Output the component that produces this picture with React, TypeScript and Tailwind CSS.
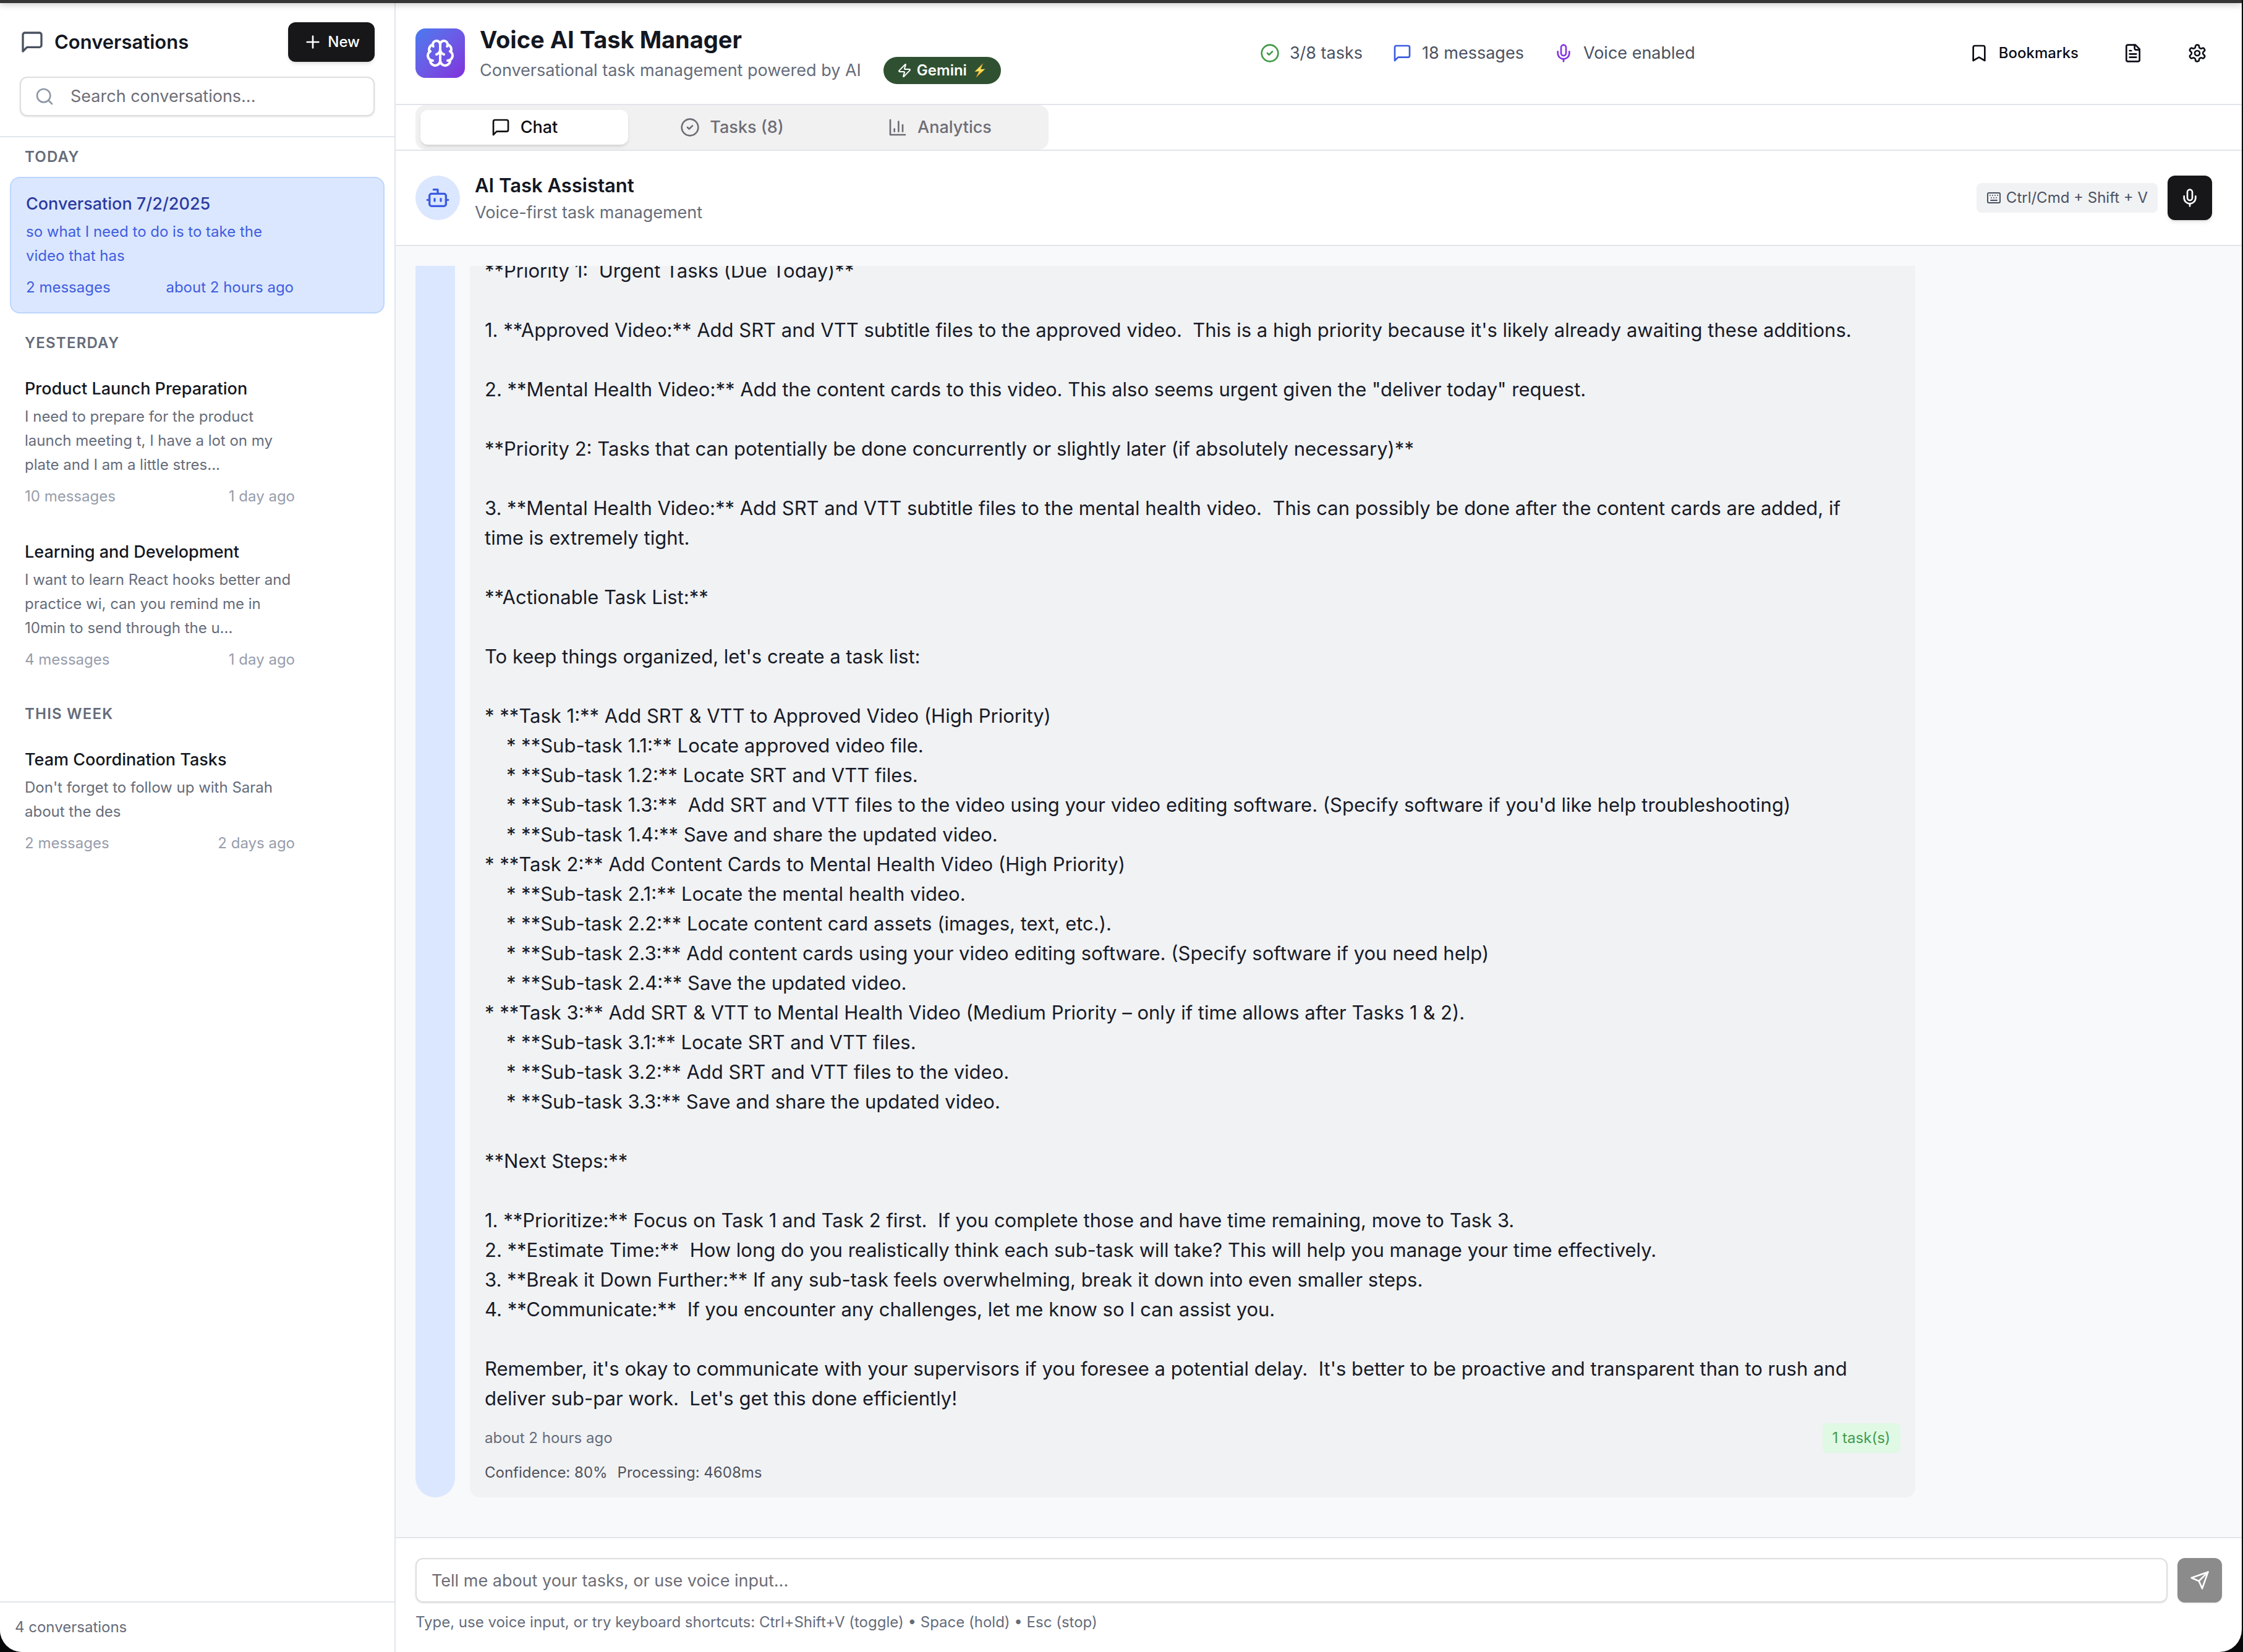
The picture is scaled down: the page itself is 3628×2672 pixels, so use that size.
import type { ReactNode } from "react";

type IconProps = { className?: string };

function Icon({ className, children }: { className?: string; children: ReactNode }) {
  return (
    <svg viewBox="0 0 24 24" fill="none" stroke="currentColor" strokeWidth="2" strokeLinecap="round" strokeLinejoin="round" aria-hidden="true" className={`shrink-0 ${className ?? ""}`}>
      {children}
    </svg>
  );
}

const MessageIcon = ({ className }: IconProps) => (
  <Icon className={className}><path d="M21 15a2 2 0 0 1-2 2H7l-4 4V5a2 2 0 0 1 2-2h14a2 2 0 0 1 2 2z" /></Icon>
);
const PlusIcon = ({ className }: IconProps) => (
  <Icon className={className}><path d="M5 12h14" /><path d="M12 5v14" /></Icon>
);
const SearchIcon = ({ className }: IconProps) => (
  <Icon className={className}><circle cx="11" cy="11" r="8" /><path d="m21 21-4.3-4.3" /></Icon>
);
const CheckIcon = ({ className }: IconProps) => (
  <Icon className={className}><circle cx="12" cy="12" r="10" /><path d="m9 12 2 2 4-4" /></Icon>
);
const MicIcon = ({ className }: IconProps) => (
  <Icon className={className}><path d="M12 2a3 3 0 0 0-3 3v7a3 3 0 0 0 6 0V5a3 3 0 0 0-3-3Z" /><path d="M19 10v2a7 7 0 0 1-14 0v-2" /><path d="M12 19v3" /></Icon>
);
const ChartIcon = ({ className }: IconProps) => (
  <Icon className={className}><path d="M3 3v18h18" /><path d="M18 17V9" /><path d="M13 17V5" /><path d="M8 17v-3" /></Icon>
);
const BookmarkIcon = ({ className }: IconProps) => (
  <Icon className={className}><path d="m19 21-7-4-7 4V5a2 2 0 0 1 2-2h10a2 2 0 0 1 2 2v16z" /></Icon>
);
const FileIcon = ({ className }: IconProps) => (
  <Icon className={className}><path d="M15 2H6a2 2 0 0 0-2 2v16a2 2 0 0 0 2 2h12a2 2 0 0 0 2-2V7Z" /><path d="M14 2v4a2 2 0 0 0 2 2h4" /><path d="M10 9H8" /><path d="M16 13H8" /><path d="M16 17H8" /></Icon>
);
const SettingsIcon = ({ className }: IconProps) => (
  <Icon className={className}><path d="M12.22 2h-.44a2 2 0 0 0-2 2v.18a2 2 0 0 1-1 1.73l-.43.25a2 2 0 0 1-2 0l-.15-.08a2 2 0 0 0-2.73.73l-.22.38a2 2 0 0 0 .73 2.73l.15.1a2 2 0 0 1 1 1.72v.51a2 2 0 0 1-1 1.74l-.15.09a2 2 0 0 0-.73 2.73l.22.38a2 2 0 0 0 2.73.73l.15-.08a2 2 0 0 1 2 0l.43.25a2 2 0 0 1 1 1.73V20a2 2 0 0 0 2 2h.44a2 2 0 0 0 2-2v-.18a2 2 0 0 1 1-1.73l.43-.25a2 2 0 0 1 2 0l.15.08a2 2 0 0 0 2.73-.73l.22-.39a2 2 0 0 0-.73-2.73l-.15-.08a2 2 0 0 1-1-1.74v-.5a2 2 0 0 1 1-1.74l.15-.09a2 2 0 0 0 .73-2.73l-.22-.38a2 2 0 0 0-2.73-.73l-.15.08a2 2 0 0 1-2 0l-.43-.25a2 2 0 0 1-1-1.73V4a2 2 0 0 0-2-2z" /><circle cx="12" cy="12" r="3" /></Icon>
);
const BotIcon = ({ className }: IconProps) => (
  <Icon className={className}><path d="M12 8V4H8" /><rect width="16" height="12" x="4" y="8" rx="2" /><path d="M2 14h2" /><path d="M20 14h2" /><path d="M15 13v2" /><path d="M9 13v2" /></Icon>
);
const KeyboardIcon = ({ className }: IconProps) => (
  <Icon className={className}><path d="M10 8h.01" /><path d="M12 12h.01" /><path d="M14 8h.01" /><path d="M16 12h.01" /><path d="M18 8h.01" /><path d="M6 8h.01" /><path d="M7 16h10" /><path d="M8 12h.01" /><rect width="20" height="16" x="2" y="4" rx="2" /></Icon>
);
const ZapIcon = ({ className }: IconProps) => (
  <Icon className={className}><path d="M4 14a1 1 0 0 1-.78-1.63l9.9-10.2a.5.5 0 0 1 .86.46l-1.92 6.02A1 1 0 0 0 13 10h7a1 1 0 0 1 .78 1.63l-9.9 10.2a.5.5 0 0 1-.86-.46l1.92-6.02A1 1 0 0 0 11 14z" /></Icon>
);
const SendIcon = ({ className }: IconProps) => (
  <Icon className={className}><path d="m22 2-7 20-4-9-9-4Z" /><path d="M22 2 11 13" /></Icon>
);
const BrainIcon = ({ className }: IconProps) => (
  <Icon className={className}>
    <path d="M12 5a3 3 0 1 0-5.997.125 4 4 0 0 0-2.526 5.77 4 4 0 0 0 .556 6.588A4 4 0 1 0 12 18Z" />
    <path d="M12 5a3 3 0 1 1 5.997.125 4 4 0 0 1 2.526 5.77 4 4 0 0 1-.556 6.588A4 4 0 1 1 12 18Z" />
    <path d="M15 13a4.5 4.5 0 0 1-3-4 4.5 4.5 0 0 1-3 4" />
    <path d="M17.599 6.5a3 3 0 0 0 .399-1.375" />
    <path d="M6.003 5.125A3 3 0 0 0 6.401 6.5" />
    <path d="M3.477 10.896a4 4 0 0 1 .585-.396" />
    <path d="M19.938 10.5a4 4 0 0 1 .585.396" />
    <path d="M6 18a4 4 0 0 1-1.967-.516" />
    <path d="M19.967 17.484A4 4 0 0 1 18 18" />
  </Icon>
);
const BoltGlyph = () => (
  <svg viewBox="0 0 25 24" role="img" aria-label="lightning" className="h-6 w-[25px] shrink-0">
    <defs>
      <linearGradient id="bolt" x1="0" y1="0" x2="0" y2="1">
        <stop offset="0" stopColor="#f0951f" />
        <stop offset="0.45" stopColor="#ffe65a" />
        <stop offset="1" stopColor="#e8861a" />
      </linearGradient>
    </defs>
    <path d="M18.2 0 4.5 14 11.6 13.3 6.2 24 21.5 9.6 14.2 10.3Z" fill="url(#bolt)" />
  </svg>
);

type ConversationItem = { title: string; preview: string; count: string; when: string; active?: boolean };

const groups: { label: string; items: ConversationItem[] }[] = [
  {
    label: "Today",
    items: [{ title: "Conversation 7/2/2025", preview: "so what I need to do is to take the video that has", count: "2 messages", when: "about 2 hours ago", active: true }],
  },
  {
    label: "Yesterday",
    items: [
      { title: "Product Launch Preparation", preview: "I need to prepare for the product launch meeting t, I have a lot on my plate and I am a little stres...", count: "10 messages", when: "1 day ago" },
      { title: "Learning and Development", preview: "I want to learn React hooks better and practice wi, can you remind me in 10min to send through the u...", count: "4 messages", when: "1 day ago" },
    ],
  },
  {
    label: "This week",
    items: [{ title: "Team Coordination Tasks", preview: "Don't forget to follow up with Sarah about the des", count: "2 messages", when: "2 days ago" }],
  },
];

const message = `**Priority 1:  Urgent Tasks (Due Today)**

1. **Approved Video:** Add SRT and VTT subtitle files to the approved video.  This is a high priority because it's likely already awaiting these additions.

2. **Mental Health Video:** Add the content cards to this video. This also seems urgent given the "deliver today" request.

**Priority 2: Tasks that can potentially be done concurrently or slightly later (if absolutely necessary)**

3. **Mental Health Video:** Add SRT and VTT subtitle files to the mental health video.  This can possibly be done after the content cards are added, if time is extremely tight.

**Actionable Task List:**

To keep things organized, let's create a task list:

* **Task 1:** Add SRT & VTT to Approved Video (High Priority)
    * **Sub-task 1.1:** Locate approved video file.
    * **Sub-task 1.2:** Locate SRT and VTT files.
    * **Sub-task 1.3:**  Add SRT and VTT files to the video using your video editing software. (Specify software if you'd like help troubleshooting)
    * **Sub-task 1.4:** Save and share the updated video.
* **Task 2:** Add Content Cards to Mental Health Video (High Priority)
    * **Sub-task 2.1:** Locate the mental health video.
    * **Sub-task 2.2:** Locate content card assets (images, text, etc.).
    * **Sub-task 2.3:** Add content cards using your video editing software. (Specify software if you need help)
    * **Sub-task 2.4:** Save the updated video.
* **Task 3:** Add SRT & VTT to Mental Health Video (Medium Priority – only if time allows after Tasks 1 & 2).
    * **Sub-task 3.1:** Locate SRT and VTT files.
    * **Sub-task 3.2:** Add SRT and VTT files to the video.
    * **Sub-task 3.3:** Save and share the updated video.

**Next Steps:**

1. **Prioritize:** Focus on Task 1 and Task 2 first.  If you complete those and have time remaining, move to Task 3.
2. **Estimate Time:**  How long do you realistically think each sub-task will take? This will help you manage your time effectively.
3. **Break it Down Further:** If any sub-task feels overwhelming, break it down into even smaller steps.
4. **Communicate:**  If you encounter any challenges, let me know so I can assist you.

Remember, it's okay to communicate with your supervisors if you foresee a potential delay.  It's better to be proactive and transparent than to rush and deliver sub-par work.  Let's get this done efficiently!`;

function ConversationCard({ item }: { item: ConversationItem }) {
  return (
    <button
      type="button"
      className={`block w-full rounded-2xl py-6 pl-6 pr-[145px] text-left ${item.active ? "border-2 border-[#bdd6fd] bg-[#dbe7fe]" : ""}`}
    >
      <span className={`mb-2 block text-[27px] leading-[35px] font-medium ${item.active ? "text-[#2b3aa0]" : "text-[#131722]"}`}>{item.title}</span>
      <span className={`mb-4 block text-[24px] leading-[39px] ${item.active ? "text-[#3f5de0]" : "text-[#656c7a]"}`}>{item.preview}</span>
      <span className={`flex justify-between text-[24px] leading-8 ${item.active ? "text-[#3f5de0]" : "text-[#979dab]"}`}>
        <span>{item.count}</span>
        <span>{item.when}</span>
      </span>
    </button>
  );
}

function Sidebar() {
  return (
    <aside className="flex w-[640px] shrink-0 flex-col border-r-2 border-[#e1e5ec] bg-white">
      <div className="border-b-2 border-[#e1e5ec] p-8">
        <div className="mb-6 flex items-center justify-between">
          <h2 className="flex items-center gap-4 text-[31px] leading-10 font-semibold text-[#131722]">
            <MessageIcon className="size-10 text-[#4a5160]" />
            Conversations
          </h2>
          <button type="button" className="flex h-16 items-center gap-2 rounded-xl bg-[#171719] px-6 text-[24px] font-medium text-white shadow-md">
            <PlusIcon className="size-8" />
            New
          </button>
        </div>
        <label className="flex h-16 items-center gap-[26px] rounded-xl border-2 border-[#dedee0] pl-[22px] shadow-sm">
          <SearchIcon className="size-8 text-[#8f97a6]" />
          <input aria-label="Search conversations" placeholder="Search conversations..." className="min-w-0 flex-1 bg-transparent text-[27px] leading-10 outline-none placeholder:text-[#6d6d76]" />
        </label>
      </div>
      <nav aria-label="Conversations" className="flex min-h-0 flex-1 flex-col gap-4 overflow-hidden px-4">
        {groups.map((group) => (
          <section key={group.label}>
            <h3 className="px-6 py-4 text-[24px] leading-8 font-semibold tracking-wider text-[#656c7a] uppercase">{group.label}</h3>
            <div className="flex flex-col gap-2">
              {group.items.map((item) => <ConversationCard key={item.title} item={item} />)}
            </div>
          </section>
        ))}
      </nav>
      <div className="border-t-2 border-[#e1e5ec] p-6 text-[24px] leading-8 text-[#656c7a]">4 conversations</div>
    </aside>
  );
}

function Header() {
  return (
    <header className="flex items-center justify-between border-b-2 border-[#e2e4ea] px-8 py-8">
      <div className="flex items-center gap-6">
        <div className="flex size-20 items-center justify-center rounded-2xl bg-linear-to-br from-[#467aef] to-[#7f2fdc] text-white">
          <BrainIcon className="size-12" />
        </div>
        <div>
          <h1 className="text-[38px] leading-[56px] font-bold text-[#131722]">Voice AI Task Manager</h1>
          <div className="flex items-center gap-9">
            <p className="text-[27px] leading-10 text-[#656c7a]">Conversational task management powered by AI</p>
            <span className="flex h-11 items-center gap-2 rounded-full bg-[#305131] px-[22px] text-[24px] font-semibold text-white">
              <ZapIcon className="size-6" />
              Gemini
              <BoltGlyph />
            </span>
          </div>
        </div>
      </div>
      <div className="flex items-center gap-12 text-[27px] leading-10 text-[#4a5160]">
        <span className="flex items-center gap-4"><CheckIcon className="size-8 text-[#3f9a46]" />3/8 tasks</span>
        <span className="flex items-center gap-4"><MessageIcon className="size-8 text-[#3b5ce2]" />18 messages</span>
        <span className="flex items-center gap-4"><MicIcon className="size-8 text-[#8434e0]" />Voice enabled</span>
      </div>
      <div className="flex items-center gap-6 text-[#0c0d16]">
        <button type="button" className="flex h-16 items-center gap-4 px-6 text-[24px] font-medium"><BookmarkIcon className="size-8" />Bookmarks</button>
        <button type="button" aria-label="Documents" className="flex h-16 items-center px-6"><FileIcon className="size-8" /></button>
        <button type="button" aria-label="Settings" className="flex h-16 items-center px-6"><SettingsIcon className="size-8" /></button>
      </div>
    </header>
  );
}

function Tabs() {
  return (
    <div className="border-b-2 border-[#e1e5ec] px-8">
      <div role="tablist" className="grid w-full max-w-[1024px] grid-cols-3 rounded-2xl bg-[#f1f1f1] p-2 text-[27px] leading-10 font-medium text-[#6d6d76]">
        <button type="button" role="tab" aria-selected="true" className="flex h-14 items-center justify-center gap-4 rounded-xl bg-white text-[#0f0f12] shadow-md"><MessageIcon className="size-8" />Chat</button>
        <button type="button" role="tab" aria-selected="false" className="flex h-14 items-center justify-center gap-4 rounded-xl"><CheckIcon className="size-8" />Tasks (8)</button>
        <button type="button" role="tab" aria-selected="false" className="flex h-14 items-center justify-center gap-4 rounded-xl"><ChartIcon className="size-8" />Analytics</button>
      </div>
    </div>
  );
}

function AssistantBar() {
  return (
    <div className="flex items-center justify-between border-b-2 border-[#e1e5ec] py-8 pr-12 pl-8">
      <div className="flex items-center gap-6">
        <div className="flex size-[72px] items-center justify-center rounded-full bg-[#dbe7fe] text-[#3b5ce2]"><BotIcon className="size-10" /></div>
        <div>
          <h2 className="text-[31px] leading-[48px] font-semibold text-[#131722]">AI Task Assistant</h2>
          <p className="text-[27px] leading-10 text-[#656c7a]">Voice-first task management</p>
        </div>
      </div>
      <div className="flex items-center gap-4">
        <kbd className="flex items-center gap-2 rounded-lg bg-[#f1f2f4] px-4 py-2 font-[Inter,sans-serif] text-[24px] leading-8 text-[#4a5160]"><KeyboardIcon className="size-6" />Ctrl/Cmd + Shift + V</kbd>
        <button type="button" aria-label="Start voice input" className="flex size-[72px] items-center justify-center rounded-xl bg-[#171719] text-white shadow-md"><MicIcon className="size-8" /></button>
      </div>
    </div>
  );
}

function MessageThread() {
  return (
    <div className="min-h-0 flex-1 bg-[#f8f9fb] p-8">
      <div className="flex h-full flex-col justify-end overflow-hidden pb-8">
        <article className="flex gap-6">
          <div className="w-16 shrink-0 rounded-full bg-[#dbe7fe]" />
          <div className="w-4/5 rounded-2xl bg-[#f1f2f4] p-6">
            <p className="pr-14 text-[31px] leading-[48px] whitespace-pre-wrap text-[#171b28]">{message}</p>
            <div className="mt-4 flex items-center justify-between text-[24px] leading-8">
              <time className="text-[#656c7a]">about 2 hours ago</time>
              <span className="rounded-lg bg-[#dff9e5] px-4 py-2 text-[#459b4b]">1 task(s)</span>
            </div>
            <div className="mt-4 flex gap-4 text-[24px] leading-8 text-[#4f535c]">
              <span>Confidence: 80%</span>
              <span>Processing: 4608ms</span>
            </div>
          </div>
        </article>
      </div>
    </div>
  );
}

function Composer() {
  return (
    <form className="border-t-2 border-[#e1e5ec] p-8">
      <div className="flex gap-4">
        <input aria-label="Message" placeholder="Tell me about your tasks, or use voice input..." className="h-[72px] min-w-0 flex-1 rounded-xl border-2 border-[#dedee0] px-6 text-[27px] leading-10 shadow-sm outline-none placeholder:text-[#6d6d76]" />
        <button type="button" aria-label="Send" className="flex size-[72px] items-center justify-center rounded-xl bg-[#8b8b8b] text-white shadow-sm"><SendIcon className="size-8" /></button>
      </div>
      <p className="mt-4 text-[24px] leading-8 text-[#656c7a]">Type, use voice input, or try keyboard shortcuts: Ctrl+Shift+V (toggle) • Space (hold) • Esc (stop)</p>
    </form>
  );
}

export default function App() {
  return (
    <div className="h-screen bg-[#08090b] pr-0.5 font-[Inter,sans-serif]">
      <div className="flex h-full flex-col overflow-hidden rounded-b-[36px] bg-white">
        <div className="z-10 h-1 shrink-0 bg-[#343434] shadow-[0_1px_0_#343434,0_1px_12px_rgba(0,0,0,0.5)]" />
        <div className="flex min-h-0 flex-1">
          <Sidebar />
          <main className="flex min-w-0 flex-1 flex-col">
            <Header />
            <Tabs />
            <AssistantBar />
            <MessageThread />
            <Composer />
          </main>
        </div>
      </div>
    </div>
  );
}
